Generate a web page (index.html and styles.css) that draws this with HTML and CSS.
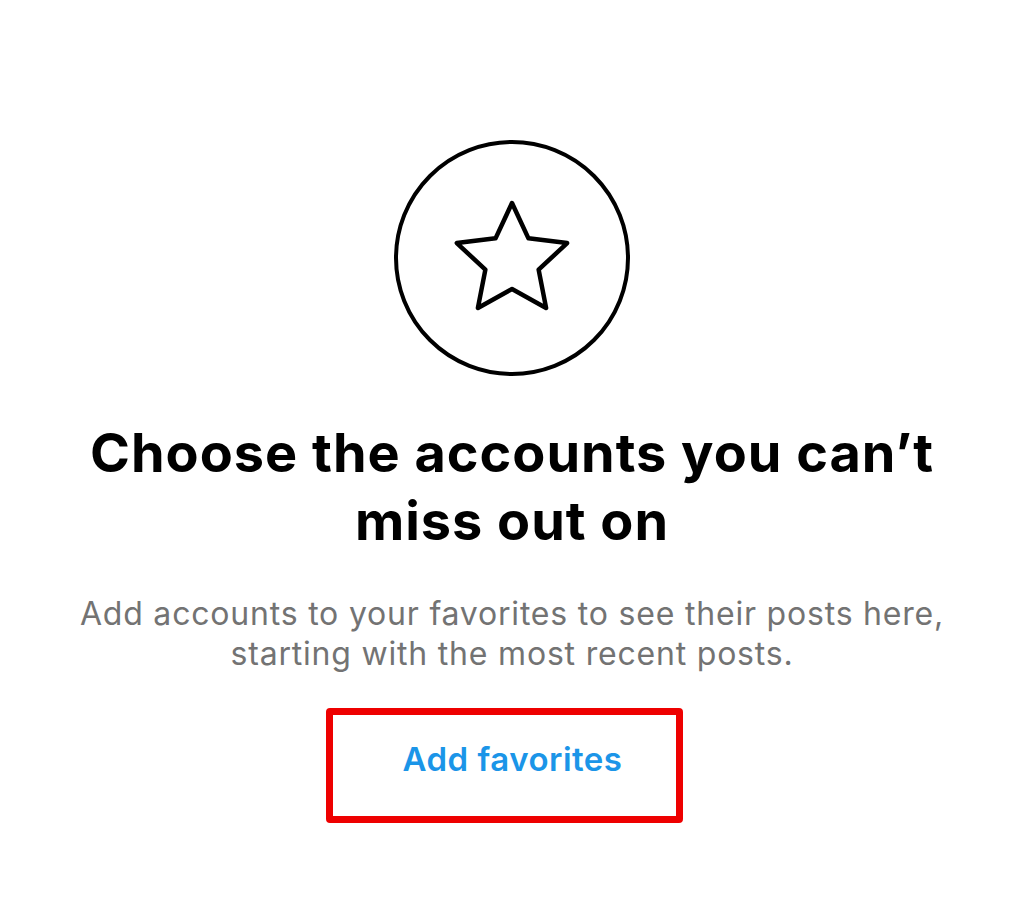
FILE: index.html
```html
<!DOCTYPE html>
<html lang="en">
<head>
  <meta charset="UTF-8" />
  <meta name="viewport" content="width=device-width, initial-scale=1.0" />
  <title>Favorites</title>
  <link rel="stylesheet" href="styles.css">
</head>
<body>
  <main class="empty-state">
    <div class="icon-ring">
      <svg class="star" width="228" height="228" viewBox="4 4 228 228" aria-hidden="true">
        <polygon points="118,63 134.46,98.35 173.16,103.08 144.63,129.65 152.09,167.92 118,149 83.91,167.92 91.37,129.65 62.84,103.08 101.54,98.35" />
      </svg>
    </div>

    <h1 class="title">Choose the accounts you can’t<br>miss out on</h1>

    <p class="subtitle">Add accounts to your favorites to see their posts here,<br>starting with the most recent posts.</p>

    <a href="#" class="add-button">Add favorites</a>
  </main>
</body>
</html>
```

FILE: styles.css
```css
body {
  margin: 0;
  background: #fff;
  font-family: Inter, "Noto Sans", sans-serif;
  color: #000;
}

.empty-state {
  display: flex;
  flex-direction: column;
  align-items: center;
  padding-top: 140px;
}

.icon-ring {
  width: 236px;
  height: 236px;
  box-sizing: border-box;
  border: 4px solid #000;
  border-radius: 50%;
}

.star {
  display: block;
  fill: none;
  stroke: #000;
  stroke-width: 4.5;
  stroke-linejoin: round;
}

.title {
  margin: 43px 0 0;
  font-size: 54px;
  line-height: 68px;
  font-weight: 700;
  text-align: center;
  letter-spacing: 1px;
}

.subtitle {
  margin: 39px 0 0;
  font-size: 32px;
  line-height: 40px;
  color: #737373;
  text-align: center;
  letter-spacing: 0.8px;
}

.add-button {
  margin: 34px 15px 0 0;
  padding: 24px 53px 37px 69px;
  border: 7px solid #ee0000;
  border-radius: 4px;
  font-size: 33px;
  line-height: 40px;
  font-weight: 600;
  letter-spacing: 0.5px;
  color: #1b95e8;
  text-decoration: none;
}
```
